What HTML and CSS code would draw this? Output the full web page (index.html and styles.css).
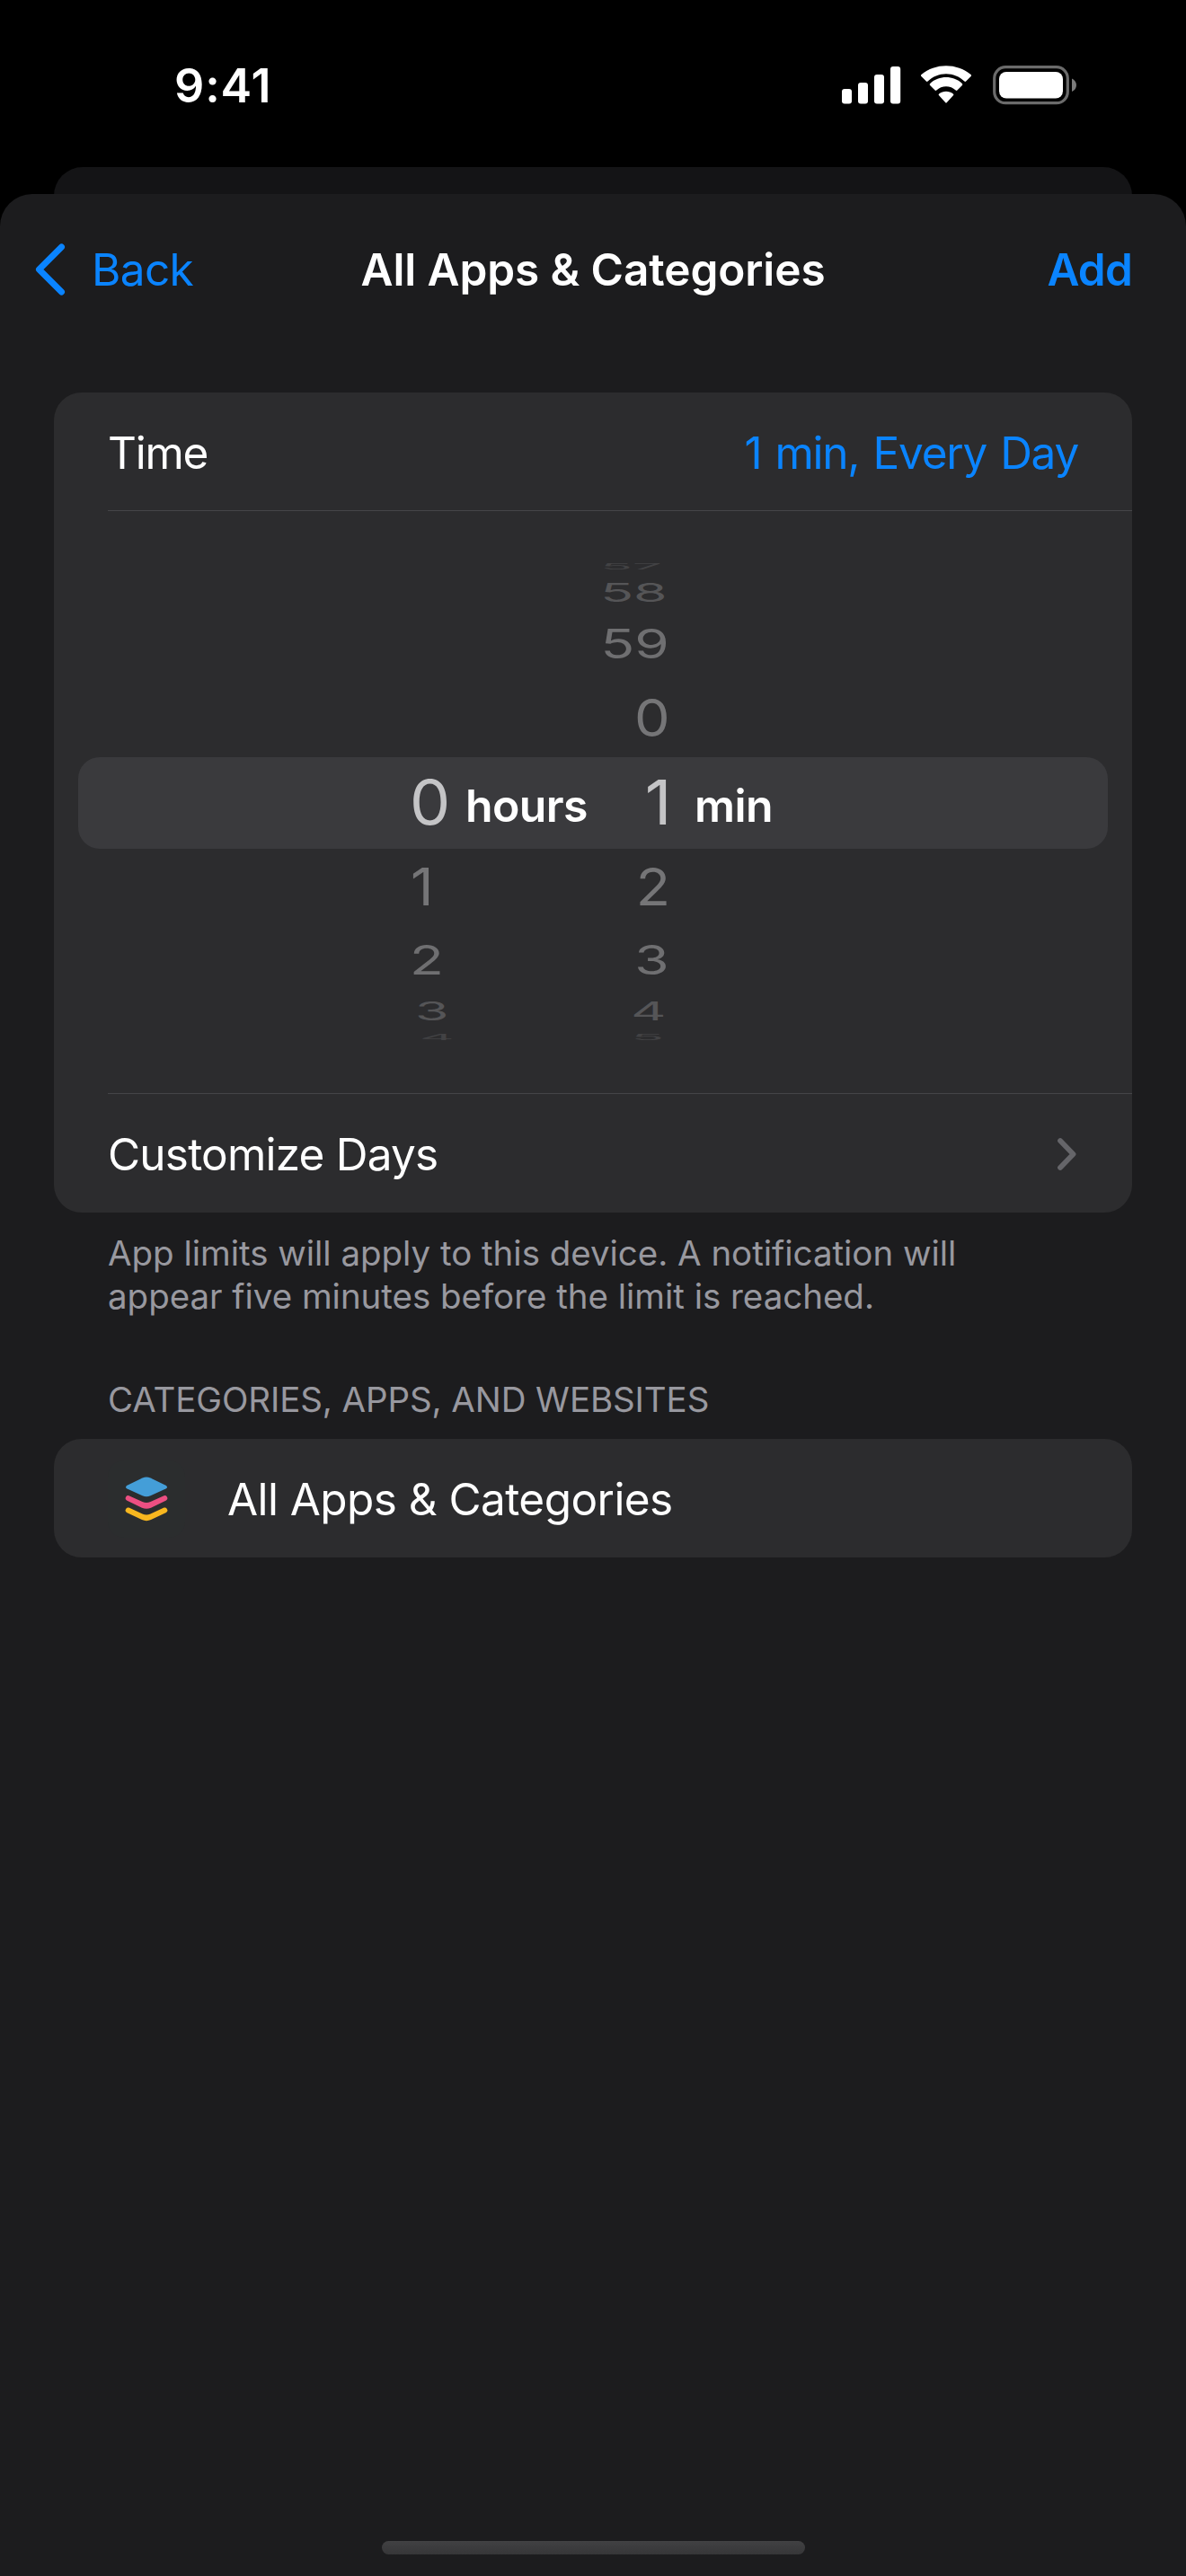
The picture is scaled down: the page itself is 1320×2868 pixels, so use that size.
FILE: index.html
```html
<!DOCTYPE html>
<html lang="en">
<head>
<meta charset="utf-8">
<title>All Apps &amp; Categories</title>
<link rel="stylesheet" href="styles.css">
</head>
<body>
<div class="screen">
  <header class="status">
    <span class="clock">9:41</span>
    <div class="indicators">
      <svg class="signal" width="66" height="44" viewBox="0 0 66 44" fill="#fff">
        <rect x="0" y="26" width="11" height="16.5" rx="3"/>
        <rect x="18" y="19" width="11" height="23.5" rx="3"/>
        <rect x="36" y="10" width="11" height="32.5" rx="3"/>
        <rect x="54" y="1" width="11.2" height="41.5" rx="3"/>
      </svg>
      <svg class="wifi" width="58" height="44" viewBox="0 0 58 44" fill="#fff">
        <path d="M29 9.3C36.7 9.3 43.9 12.3 49.4 17.6Q50.3 18.3 51.1 17.5L56.6 12Q57.6 11 56.5 10C41.100 -3.100 16.900 -3.100 1.500 10Q0.400 11 1.400 12L6.900 17.500Q7.700 18.300 8.600 17.600C14.100 12.300 21.300 9.300 29 9.300Z"/>
        <path d="M29 23.300C33 23.300 36.800 24.800 39.700 27.500Q40.600 28.300 41.400 27.500L46.900 22Q47.900 20.900 46.800 19.900C36.800 10.800 21.200 10.800 11.200 19.900Q10.100 20.900 11.100 22L16.600 27.500Q17.400 28.300 18.300 27.500C21.200 24.800 25 23.300 29 23.300Z"/>
        <path d="M36.900 33.300Q38 32.300 36.900 31.400C32.300 27.700 25.700 27.700 21.100 31.400Q20 32.300 21.100 33.300L28.100 40.900Q29 42 29.900 40.900Z"/>
      </svg>
      <svg class="battery" width="94" height="44" viewBox="0 0 94 44">
        <rect x="1.700" y="1.700" width="81.600" height="40" rx="12.500" fill="none" stroke="#6b6b6b" stroke-width="3.200"/>
        <rect x="7" y="7" width="71" height="29.500" rx="8" fill="#fff"/>
        <path d="M88 14.500C91 15.800 93 18.500 93 21.800S91 27.800 88 29Z" fill="#7b7b7b"/>
      </svg>
    </div>
  </header>

  <div class="backdrop"></div>

  <main class="sheet">
    <nav class="nav">
      <div class="back">
        <svg width="36" height="60" viewBox="0 0 36 60" fill="none" stroke="#0a84ff" stroke-width="7" stroke-linecap="round" stroke-linejoin="round">
          <path d="M29.500 5L4.500 30L29.500 55"/>
        </svg>
        <span class="back-label">Back</span>
      </div>
      <h1 class="title">All Apps &amp; Categories</h1>
      <span class="add">Add</span>
    </nav>

    <section class="card limit">
      <div class="row">
        <span class="time">Time</span>
        <span class="value">1 min, Every Day</span>
      </div>
      <div class="divider"></div>
      <div class="picker">
        <div class="band"></div>
        <div class="wheel hours">
          <div class="slot edge"></div>
          <div class="slot far"></div>
          <div class="slot mid"></div>
          <div class="slot near"></div>
          <div class="slot selected"><span>0</span></div>
          <div class="slot near"><span>1</span></div>
          <div class="slot mid"><span>2</span></div>
          <div class="slot far"><span>3</span></div>
          <div class="slot edge"><span>4</span></div>
        </div>
        <span class="unit unit-hours">hours</span>
        <div class="wheel minutes">
          <div class="slot edge wide"><span>57</span></div>
          <div class="slot far wide"><span>58</span></div>
          <div class="slot mid"><span>59</span></div>
          <div class="slot near"><span>0</span></div>
          <div class="slot selected"><span>1</span></div>
          <div class="slot near"><span>2</span></div>
          <div class="slot mid"><span>3</span></div>
          <div class="slot far"><span>4</span></div>
          <div class="slot edge"><span>5</span></div>
        </div>
        <span class="unit unit-minutes">min</span>
      </div>
      <div class="divider"></div>
      <div class="row">
        <span class="customize">Customize Days</span>
        <svg width="24" height="38" viewBox="0 0 24 38" fill="none" stroke="#656569" stroke-width="5.800" stroke-linecap="round" stroke-linejoin="round">
          <path d="M4 4L18.500 19L4 34"/>
        </svg>
      </div>
    </section>

    <p class="note">App limits will apply to this device. A notification will<br>appear five minutes before the limit is reached.</p>

    <h2 class="heading">CATEGORIES, APPS, AND WEBSITES</h2>
    <section class="card">
      <div class="row category">
        <span class="tile">
          <svg width="48" height="50" viewBox="0 0 48 50">
            <path fill="#449ed8" d="M19.500 1.500Q24 -0.500 28.500 1.500L45.500 9.800Q48.500 11.700 45.500 13.600L28.500 21.300Q24 23.300 19.500 21.300L2.500 13.600Q-0.500 11.700 2.500 9.800Z"/>
            <path fill="#ec4f82" d="M4.500 21.200L19.500 28Q24 30 28.500 28L43.500 21.200Q45.500 20.500 46.500 22L47.300 23.600Q48 25.300 46 26.500L29 34.700Q24 36.800 19 34.700L2 26.500Q0 25.300 0.700 23.600L1.500 22Q2.500 20.500 4.500 21.200Z"/>
            <path fill="#f8b71f" d="M4.500 34.600L19.500 41.400Q24 43.400 28.500 41.400L43.500 34.600Q45.500 33.900 46.500 35.400L47.300 37Q48 38.700 46 39.900L29 48.100Q24 50.200 19 48.100L2 39.900Q0 38.700 0.700 37L1.500 35.400Q2.500 33.900 4.500 34.600Z"/>
          </svg>
        </span>
        <span class="category-name">All Apps &amp; Categories</span>
      </div>
    </section>

    <div class="home-indicator"></div>
  </main>
</div>
</body>
</html>
```
FILE: styles.css
```css
* {
  box-sizing: border-box;
  margin: 0;
}

body {
  background: #000;
  color: #fff;
  font-family: Inter, "Liberation Sans", sans-serif;
}

.screen {
  display: flex;
  flex-direction: column;
  width: 1320px;
  height: 2868px;
}

svg {
  display: block;
  flex: none;
}

/* Status bar */
.status {
  display: flex;
  justify-content: space-between;
  align-items: flex-start;
  height: 186px;
  padding: 73px 121px 0 194px;
}

.clock {
  font-size: 52px;
  font-weight: 600;
  line-height: 46px;
  letter-spacing: 0.89px;
}

.indicators {
  display: flex;
}

.wifi {
  margin-left: 21px;
}

.battery {
  margin-left: 23px;
}

/* Sheets */
.backdrop {
  height: 66px;
  margin: 0 60px -36px;
  border-radius: 32px 32px 0 0;
  background: #141416;
}

.sheet {
  display: flex;
  flex: 1;
  flex-direction: column;
  padding: 0 60px 24px;
  border-radius: 36px 36px 0 0;
  background: #1c1c1e;
}

.nav {
  display: grid;
  grid-template-columns: 1fr auto 1fr;
  align-items: center;
  height: 168px;
  margin-bottom: 53px;
  font-size: 49.5px;
  line-height: 60px;
}

.back {
  display: flex;
  align-items: center;
  margin-left: -21px;
  color: #0a84ff;
}

.back-label {
  margin-left: 27px;
  letter-spacing: -0.65px;
}

.title {
  font-size: 49.5px;
  font-weight: 600;
  letter-spacing: -0.09px;
}

.add {
  justify-self: end;
  color: #0a84ff;
  font-weight: 600;
  letter-spacing: -0.83px;
}

/* Grouped list */
.card {
  border-radius: 31px;
  background: #2c2c2e;
}

.row {
  display: flex;
  justify-content: space-between;
  align-items: center;
  height: 132px;
  padding: 2px 60px 0;
  font-size: 49.5px;
  line-height: 60px;
}

.limit .row:first-child {
  height: 131px;
}

.divider {
  height: 1px;
  margin-left: 60px;
  background: #454548;
}

.time {
  letter-spacing: -1.27px;
}

.value {
  color: #0a84ff;
  letter-spacing: -1.25px;
  word-spacing: 2.5px;
}

.customize {
  letter-spacing: -0.79px;
}

/* Duration picker */
.picker {
  display: grid;
  grid-template-columns: 397px 61px 138px 90px 27px 1fr;
  align-items: center;
  height: 648px;
}

.picker > * {
  grid-row: 1;
}

.band {
  grid-column: 1 / -1;
  height: 102px;
  margin: 2px 27px 0;
  border-radius: 24px;
  background: #3a3a3d;
}

.wheel {
  font-size: 69px;
}

.hours {
  grid-column: 2;
}

.minutes {
  grid-column: 4;
}

.slot {
  display: flex;
  align-items: center;
  line-height: 0;
  color: #757577;
}

.minutes .slot {
  justify-content: flex-end;
}

.hours span {
  transform-origin: left center;
}

.minutes span {
  transform-origin: right center;
}

.selected {
  height: 102px;
  color: #c4c4c6;
}

.near {
  height: 86.6px;
}

.mid {
  height: 76.2px;
  color: #6f6f71;
}

.far {
  height: 39.4px;
  color: #555557;
}

.edge {
  height: 17.6px;
  color: #424244;
}

.selected span {
  transform: translateX(-1px) scale(1.04, 1);
}

.minutes .selected span {
  transform: translateX(1.5px) scale(1.06, 1);
}

.near span {
  transform: scale(0.91, 0.83);
}

.mid span {
  transform: translateX(-1px) scale(0.9, 0.65);
}

.hours .far span {
  transform: translateX(5px) scale(0.88, 0.41);
}

.hours .edge span {
  transform: translateX(10px) scale(0.87, 0.13);
}

.minutes .far span {
  transform: translateX(-4px) scale(0.88, 0.41);
}

.minutes .edge span {
  transform: translateX(-7px) scale(0.87, 0.13);
}

.minutes .far.wide span {
  transform: translateX(-3px) scale(0.88, 0.41);
}

.minutes .edge.wide span {
  transform: translateX(-9px) scale(0.85, 0.13);
}

.unit {
  padding-top: 7px;
  font-size: 50px;
  font-weight: 600;
  line-height: 60px;
}

.unit-hours {
  grid-column: 3;
  letter-spacing: -0.63px;
}

.unit-minutes {
  grid-column: 6;
  letter-spacing: -0.55px;
}

/* Texts around the cards */
.note {
  margin: 21px 60px 0;
  color: #98989f;
  font-size: 38.5px;
  line-height: 48px;
  letter-spacing: -0.03px;
}

.heading {
  margin: 67px 60px 20px;
  color: #98989f;
  font-size: 38.5px;
  font-weight: 400;
  line-height: 48px;
  letter-spacing: -0.1px;
}

.category {
  justify-content: flex-start;
}

.tile {
  display: flex;
  justify-content: center;
  align-items: center;
  width: 86px;
  height: 86px;
  border-radius: 18px;
  background: #2b2d2e;
}

.category-name {
  margin-left: 47px;
  letter-spacing: -0.57px;
}

.home-indicator {
  width: 471px;
  height: 15px;
  margin: auto auto 0;
  border-radius: 8px;
  background: linear-gradient(#414143, #363638);
}
```
